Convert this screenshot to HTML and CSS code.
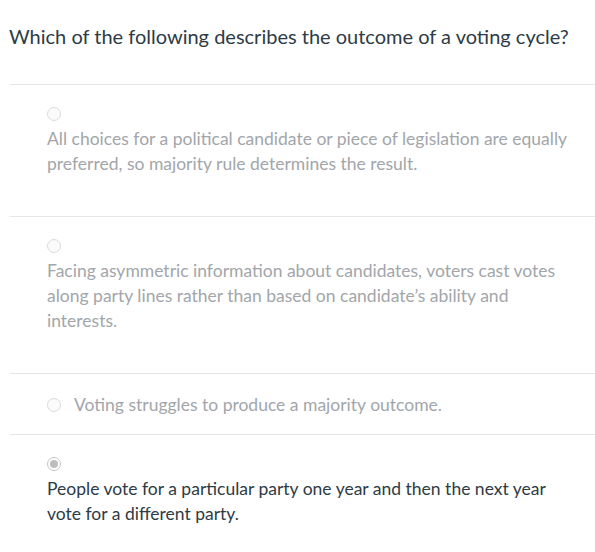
FILE: index.html
```html
<!DOCTYPE html>
<html>
<head>
<meta charset="utf-8">
<link rel="stylesheet" href="styles.css">
</head>
<body>
<div class="question">
  <div class="question-text">Which of the following describes the outcome of a voting cycle?</div>
  <div class="answers">
    <div class="answer">
      <div class="radio-line"><span class="radio"></span></div>
      <div class="answer-text muted block">All choices for a political candidate or piece of legislation are equally preferred, so majority rule determines the result.</div>
    </div>
    <div class="answer">
      <div class="radio-line"><span class="radio"></span></div>
      <div class="answer-text muted block">Facing asymmetric information about candidates, voters cast votes along party lines rather than based on candidate’s ability and interests.</div>
    </div>
    <div class="answer short">
      <div class="radio-line inline"><span class="radio"></span><span class="answer-text muted">Voting struggles to produce a majority outcome.</span></div>
    </div>
    <div class="answer">
      <div class="radio-line"><span class="radio checked"></span></div>
      <div class="answer-text">People vote for a particular party one year and then the next year vote for a different party.</div>
    </div>
  </div>
</div>
</body>
</html>
```
FILE: styles.css
```css
html, body {
  margin: 0;
  padding: 0;
  background: #ffffff;
}
body {
  font-family: Lato, "Open Sans", sans-serif;
  color: #2d3b45;
}
.question {
  padding: 21px 0 0 10px;
}
.question-text {
  font-size: 20px;
  line-height: 30px;
  margin-left: -1px;
  padding-bottom: 33px;
}
.answer {
  border-top: 1px solid #e6e6e6;
  padding: 16px 0 16px 37px;
  font-size: 17.5px;
  line-height: 25px;
}
.answer.short {
  padding-top: 18px;
  padding-bottom: 17px;
}
.radio-line {
  height: 25px;
  display: flex;
  align-items: center;
}
.radio-line.inline {
  gap: 13px;
}
.radio {
  box-sizing: border-box;
  width: 14px;
  height: 14px;
  border-radius: 50%;
  border: 1px solid #dadada;
  background: #fbfbfb;
  flex: none;
  position: relative;
}
.radio.checked {
  border: 1px solid #c4c4c4;
  background: #ffffff;
}
.radio.checked::after {
  content: "";
  position: absolute;
  left: 2px;
  top: 2px;
  width: 8px;
  height: 8px;
  border-radius: 50%;
  background: #bdbdbd;
}
.answer-text {
  padding-right: 20px;
}
.answer-text.muted {
  color: #a2a6aa;
}
.answer-text.block {
  margin-bottom: 24px;
}
.radio-line .answer-text {
  padding-right: 0;
}
```
